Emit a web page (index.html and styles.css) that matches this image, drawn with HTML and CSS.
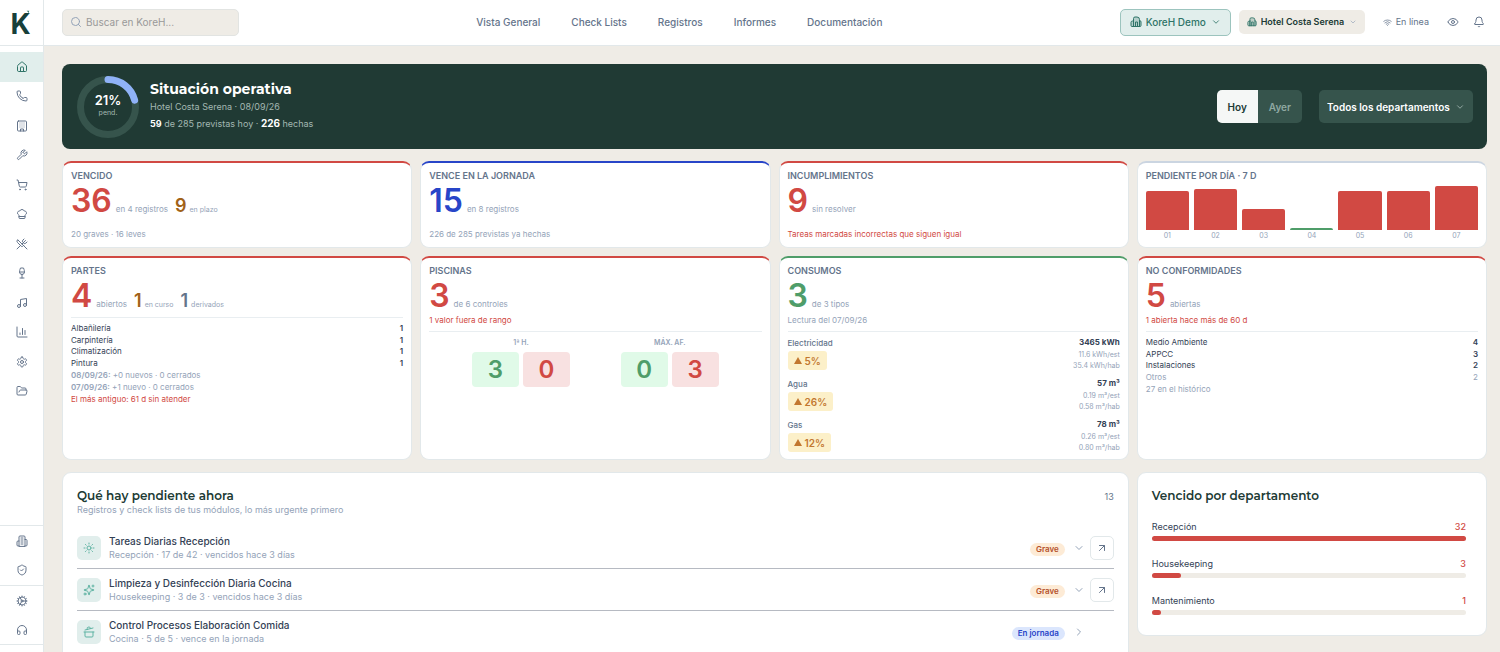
FILE: index.html
```html
<!doctype html>
<html lang="es">
  <head>
    <meta charset="UTF-8" />
    <meta name="viewport" content="width=device-width, initial-scale=1.0" />
    <title>KoreH - Vista General</title>
    <link rel="stylesheet" href="styles.css">
  </head>
  <body>
    <!-- icon sprite -->
    <svg class="sprite" aria-hidden="true">
      <symbol id="i-home" viewBox="0 0 24 24"><path d="M15 21v-8a1 1 0 0 0-1-1h-4a1 1 0 0 0-1 1v8"/><path d="M3 10a2 2 0 0 1 .709-1.528l7-6a2 2 0 0 1 2.582 0l7 6A2 2 0 0 1 21 10v9a2 2 0 0 1-2 2H5a2 2 0 0 1-2-2z"/></symbol>
      <symbol id="i-phone" viewBox="0 0 24 24"><path d="M13.832 16.568a1 1 0 0 0 1.213-.303l.355-.465A2 2 0 0 1 17 15h3a2 2 0 0 1 2 2v3a2 2 0 0 1-2 2A18 18 0 0 1 2 4a2 2 0 0 1 2-2h3a2 2 0 0 1 2 2v3a2 2 0 0 1-.8 1.6l-.468.351a1 1 0 0 0-.292 1.233 14 14 0 0 0 6.392 6.384"/></symbol>
      <symbol id="i-building" viewBox="0 0 24 24"><rect width="18" height="20" x="3" y="2" rx="2"/><path d="M9 22v-4h6v4M8 6h.01M16 6h.01M12 6h.01M12 10h.01M12 14h.01M16 10h.01M16 14h.01M8 10h.01M8 14h.01"/></symbol>
      <symbol id="i-wrench" viewBox="0 0 24 24"><path d="M14.7 6.3a1 1 0 0 0 0 1.4l1.6 1.6a1 1 0 0 0 1.4 0l3.77-3.77a6 6 0 0 1-7.94 7.94l-6.91 6.91a2.12 2.12 0 0 1-3-3l6.91-6.91a6 6 0 0 1 7.94-7.94l-3.76 3.76z"/></symbol>
      <symbol id="i-cart" viewBox="0 0 24 24"><circle cx="8" cy="21" r="1"/><circle cx="19" cy="21" r="1"/><path d="M2.05 2.05h2l2.66 12.42a2 2 0 0 0 2 1.58h9.78a2 2 0 0 0 1.95-1.57l1.65-7.43H5.12"/></symbol>
      <symbol id="i-chef" viewBox="0 0 24 24"><path d="M17 21a1 1 0 0 0 1-1v-5.35c0-.457.316-.844.727-1.041a4 4 0 0 0-2.134-7.589 5 5 0 0 0-9.186 0 4 4 0 0 0-2.134 7.588c.411.198.727.585.727 1.041V20a1 1 0 0 0 1 1Z"/><path d="M6 17h12"/></symbol>
      <symbol id="i-utensils" viewBox="0 0 24 24"><path d="m16 2-2.3 2.3a3 3 0 0 0 0 4.2l1.8 1.8a3 3 0 0 0 4.2 0L22 8"/><path d="M15 15 3.3 3.3a4.2 4.2 0 0 0 0 6l7.3 7.3c.7.7 2 .7 2.8 0L15 15Zm0 0 7 7"/><path d="m2.1 21.8 6.4-6.3M19 5l-7 7"/></symbol>
      <symbol id="i-wine" viewBox="0 0 24 24"><path d="M8 22h8M7 10h10M12 15v7"/><path d="M12 15a5 5 0 0 0 5-5c0-2-.5-4-2-8H9c-1.5 4-2 6-2 8a5 5 0 0 0 5 5Z"/></symbol>
      <symbol id="i-music" viewBox="0 0 24 24"><path d="M9 18V5l12-2v13"/><circle cx="6" cy="18" r="3"/><circle cx="18" cy="16" r="3"/></symbol>
      <symbol id="i-chart" viewBox="0 0 24 24"><path d="M2 2v18a2 2 0 0 0 2 2h18M18 17V9M13 17V5M8 17v-3"/></symbol>
      <symbol id="i-settings" viewBox="0 0 24 24"><path d="M12.22 2h-.44a2 2 0 0 0-2 2v.18a2 2 0 0 1-1 1.73l-.43.25a2 2 0 0 1-2 0l-.15-.08a2 2 0 0 0-2.73.73l-.22.38a2 2 0 0 0 .73 2.73l.15.1a2 2 0 0 1 1 1.72v.51a2 2 0 0 1-1 1.74l-.15.09a2 2 0 0 0-.73 2.73l.22.38a2 2 0 0 0 2.73.73l.15-.08a2 2 0 0 1 2 0l.43.25a2 2 0 0 1 1 1.73V20a2 2 0 0 0 2 2h.44a2 2 0 0 0 2-2v-.18a2 2 0 0 1 1-1.73l.43-.25a2 2 0 0 1 2 0l.15.08a2 2 0 0 0 2.73-.73l.22-.39a2 2 0 0 0-.73-2.73l-.15-.08a2 2 0 0 1-1-1.74v-.5a2 2 0 0 1 1-1.74l.15-.09a2 2 0 0 0 .73-2.73l-.22-.38a2 2 0 0 0-2.73-.73l-.15.08a2 2 0 0 1-2 0l-.43-.25a2 2 0 0 1-1-1.73V4a2 2 0 0 0-2-2z"/><circle cx="12" cy="12" r="3"/></symbol>
      <symbol id="i-folder" viewBox="0 0 24 24"><path d="m6 14 1.5-2.9A2 2 0 0 1 9.24 10H20a2 2 0 0 1 1.94 2.5l-1.54 6a2 2 0 0 1-1.95 1.5H4a2 2 0 0 1-2-2V5a2 2 0 0 1 2-2h3.9a2 2 0 0 1 1.69.9l.81 1.2a2 2 0 0 0 1.67.9H18a2 2 0 0 1 2 2v2"/></symbol>
      <symbol id="i-offices" viewBox="0 0 24 24"><path d="M6 22V4a2 2 0 0 1 2-2h8a2 2 0 0 1 2 2v18Z"/><path d="M6 12H4a2 2 0 0 0-2 2v6a2 2 0 0 0 2 2h2M18 9h2a2 2 0 0 1 2 2v9a2 2 0 0 1-2 2h-2M10 6h4M10 10h4M10 14h4M10 18h4"/></symbol>
      <symbol id="i-shield" viewBox="0 0 24 24"><path d="M20 13c0 5-3.5 7.5-7.66 8.95a1 1 0 0 1-.67-.01C7.5 20.5 4 18 4 13V6a1 1 0 0 1 1-1c2 0 4.5-1.2 6.24-2.72a1.17 1.17 0 0 1 1.52 0C14.51 3.81 17 5 19 5a1 1 0 0 1 1 1z"/><path d="m9 12 2 2 4-4"/></symbol>
      <symbol id="i-cog" viewBox="0 0 24 24"><circle cx="12" cy="12" r="8"/><circle cx="12" cy="12" r="2"/><path d="M12 2v2M12 22v-2M17 20.66l-1-1.73M11 10.27 7 3.34M20.66 17l-1.73-1M3.34 7l1.73 1M14 12h8M2 12h2M20.66 7l-1.73 1M3.34 17l1.73-1M17 3.34l-1 1.73M11 13.73l-4 6.93"/></symbol>
      <symbol id="i-headphones" viewBox="0 0 24 24"><path d="M3 14h3a2 2 0 0 1 2 2v3a2 2 0 0 1-2 2H5a2 2 0 0 1-2-2v-7a9 9 0 0 1 18 0v7a2 2 0 0 1-2 2h-1a2 2 0 0 1-2-2v-3a2 2 0 0 1 2-2h3"/></symbol>
      <symbol id="i-search" viewBox="0 0 24 24"><circle cx="11" cy="11" r="8"/><path d="m21 21-4.3-4.3"/></symbol>
      <symbol id="i-hotel" viewBox="0 0 24 24"><path fill="currentColor" fill-opacity=".25" d="M7 21V5a3 3 0 0 1 3-3h4a5 5 0 0 1 5 5v2a3 3 0 0 1 3 3v7a2 2 0 0 1-2 2H4a2 2 0 0 1-2-2v-6a3 3 0 0 1 3-3h2"/><path d="M7 9v12M11 21v-9h4v9M19 9v12"/></symbol>
      <symbol id="i-down" viewBox="0 0 24 24"><path d="m6 9 6 6 6-6"/></symbol>
      <symbol id="i-right" viewBox="0 0 24 24"><path d="m9 18 6-6-6-6"/></symbol>
      <symbol id="i-wifi" viewBox="0 0 24 24"><path d="M12 20h.01M2 8.82a15 15 0 0 1 20 0M5 12.86a10 10 0 0 1 14 0M8.5 16.43a5 5 0 0 1 7 0"/></symbol>
      <symbol id="i-eye" viewBox="0 0 24 24"><path d="M2.06 12.35a1 1 0 0 1 0-.7 10.75 10.75 0 0 1 19.88 0 1 1 0 0 1 0 .7 10.75 10.75 0 0 1-19.88 0"/><circle cx="12" cy="12" r="3"/></symbol>
      <symbol id="i-bell" viewBox="0 0 24 24"><path d="M10.27 21a2 2 0 0 0 3.46 0"/><path d="M3.26 15.33A1 1 0 0 0 4 17h16a1 1 0 0 0 .74-1.67C19.41 13.96 18 12.5 18 8A6 6 0 0 0 6 8c0 4.5-1.41 5.96-2.74 7.33"/></symbol>
      <symbol id="i-sun" viewBox="0 0 24 24"><circle cx="12" cy="12" r="4"/><path d="M12 2v2M12 20v2M4.93 4.93l1.41 1.41M17.66 17.66l1.41 1.41M2 12h2M20 12h2M6.34 17.66l-1.41 1.41M19.07 4.93l-1.41 1.41"/></symbol>
      <symbol id="i-sparkles" viewBox="0 0 24 24"><path d="M9.94 15.5A2 2 0 0 0 8.5 14.06l-6.14-1.58a.5.5 0 0 1 0-.96L8.5 9.94A2 2 0 0 0 9.94 8.5l1.58-6.14a.5.5 0 0 1 .96 0l1.58 6.14a2 2 0 0 0 1.44 1.44l6.14 1.58a.5.5 0 0 1 0 .96l-6.14 1.58a2 2 0 0 0-1.44 1.44l-1.58 6.14a.5.5 0 0 1-.96 0z"/><path d="M20 2v4M22 4h-4"/><circle cx="4" cy="20" r="2"/></symbol>
      <symbol id="i-pot" viewBox="0 0 24 24"><path d="M2 12h20M20 12v8a2 2 0 0 1-2 2H6a2 2 0 0 1-2-2v-8M4 8l16-4"/><path d="m8.86 6.78-.45-1.81a2 2 0 0 1 1.45-2.43l1.94-.48a2 2 0 0 1 2.43 1.46l.45 1.8"/></symbol>
      <symbol id="i-open" viewBox="0 0 24 24"><path d="M7 7h10v10M7 17 17 7"/></symbol>
    </svg>

    <aside class="sidebar">
      <a class="logo" href="#" aria-label="KoreH">K<svg class="logo-mark" viewBox="0 0 6 6"><path d="M1 1h4L3 6l0-3z"/></svg></a>
      <nav class="side-nav side-main" aria-label="Módulos">
        <a class="active" href="#"><svg class="icon"><use href="#i-home"/></svg></a>
        <a href="#"><svg class="icon"><use href="#i-phone"/></svg></a>
        <a href="#"><svg class="icon"><use href="#i-building"/></svg></a>
        <a href="#"><svg class="icon"><use href="#i-wrench"/></svg></a>
        <a href="#"><svg class="icon"><use href="#i-cart"/></svg></a>
        <a href="#"><svg class="icon"><use href="#i-chef"/></svg></a>
        <a href="#"><svg class="icon"><use href="#i-utensils"/></svg></a>
        <a href="#"><svg class="icon"><use href="#i-wine"/></svg></a>
        <a href="#"><svg class="icon"><use href="#i-music"/></svg></a>
        <a href="#"><svg class="icon"><use href="#i-chart"/></svg></a>
        <a href="#"><svg class="icon"><use href="#i-settings"/></svg></a>
        <a href="#"><svg class="icon"><use href="#i-folder"/></svg></a>
      </nav>
      <nav class="side-nav side-group" aria-label="Empresa">
        <a href="#"><svg class="icon"><use href="#i-offices"/></svg></a>
        <a href="#"><svg class="icon"><use href="#i-shield"/></svg></a>
      </nav>
      <nav class="side-nav side-group side-last" aria-label="Ajustes">
        <a href="#"><svg class="icon"><use href="#i-cog"/></svg></a>
        <a href="#"><svg class="icon"><use href="#i-headphones"/></svg></a>
      </nav>
    </aside>

    <div class="page">
      <header class="topbar">
        <label class="search">
          <svg class="icon"><use href="#i-search"/></svg>
          <input type="search" placeholder="Buscar en KoreH..." aria-label="Buscar en KoreH" />
        </label>
        <nav class="top-nav">
          <a href="#">Vista General</a>
          <a href="#">Check Lists</a>
          <a href="#">Registros</a>
          <a href="#">Informes</a>
          <a href="#">Documentación</a>
        </nav>
        <div class="tools">
          <label class="picker picker-company">
            <svg class="icon"><use href="#i-hotel"/></svg>
            <select aria-label="Empresa"><option>KoreH Demo</option></select>
            <svg class="icon chevron"><use href="#i-down"/></svg>
          </label>
          <label class="picker picker-hotel">
            <svg class="icon"><use href="#i-hotel"/></svg>
            <select aria-label="Hotel"><option>Hotel Costa Serena</option></select>
            <svg class="icon chevron"><use href="#i-down"/></svg>
          </label>
          <span class="online"><svg class="icon"><use href="#i-wifi"/></svg>En línea</span>
          <button class="icon-btn" type="button" aria-label="Vista"><svg class="icon"><use href="#i-eye"/></svg></button>
          <button class="icon-btn" type="button" aria-label="Avisos"><svg class="icon"><use href="#i-bell"/></svg></button>
        </div>
      </header>

      <main class="content">
        <section class="hero">
          <div class="ring">
            <svg viewBox="0 0 62 62">
              <circle class="ring-track" cx="31" cy="31" r="27.500"/>
              <circle class="ring-value" cx="31" cy="31" r="27.500" pathLength="100" stroke-dasharray="21 100"/>
            </svg>
            <div class="ring-label"><strong>21%</strong><span>pend.</span></div>
          </div>
          <div class="hero-text">
            <h1>Situación operativa</h1>
            <p>Hotel Costa Serena · 08/09/26</p>
            <p><strong>59</strong> de 285 previstas hoy · <strong class="done">226</strong> hechas</p>
          </div>
          <div class="segment">
            <button class="on" type="button">Hoy</button>
            <button type="button">Ayer</button>
          </div>
          <label class="picker picker-dept">
            <select aria-label="Departamento"><option>Todos los departamentos</option></select>
            <svg class="icon chevron"><use href="#i-down"/></svg>
          </label>
        </section>

        <section class="cards">
          <article class="card red">
            <h2>Vencido</h2>
            <p class="figures"><b class="big">36</b><span>en 4 registros</span><b class="mid amber">9</b><small>en plazo</small></p>
            <p class="note foot">20 graves · 16 leves</p>
          </article>
          <article class="card blue">
            <h2>Vence en la jornada</h2>
            <p class="figures"><b class="big">15</b><span>en 8 registros</span></p>
            <p class="note foot">226 de 285 previstas ya hechas</p>
          </article>
          <article class="card red">
            <h2>Incumplimientos</h2>
            <p class="figures"><b class="big">9</b><span>sin resolver</span></p>
            <p class="note foot alert">Tareas marcadas incorrectas que siguen igual</p>
          </article>
          <article class="card plain">
            <h2>Pendiente por día · 7 d</h2>
            <div class="bars">
              <div class="day"><i style="height: 39px"></i><span>01</span></div>
              <div class="day"><i style="height: 41px"></i><span>02</span></div>
              <div class="day"><i style="height: 21px"></i><span>03</span></div>
              <div class="day"><i class="none"></i><span>04</span></div>
              <div class="day"><i style="height: 39px"></i><span>05</span></div>
              <div class="day"><i style="height: 39px"></i><span>06</span></div>
              <div class="day"><i style="height: 44px"></i><span>07</span></div>
            </div>
          </article>

          <article class="card red">
            <h2>Partes</h2>
            <p class="figures"><b class="big">4</b><span>abiertos</span><b class="mid amber">1</b><small>en curso</small><b class="mid slate">1</b><small>derivados</small></p>
            <div class="detail">
              <dl class="list">
                <div><dt>Albañilería</dt><dd>1</dd></div>
                <div><dt>Carpintería</dt><dd>1</dd></div>
                <div><dt>Climatización</dt><dd>1</dd></div>
                <div><dt>Pintura</dt><dd>1</dd></div>
              </dl>
              <p class="log"><b>08/09/26:</b> +0 nuevos · 0 cerrados</p>
              <p class="log"><b>07/09/26:</b> +1 nuevo · 0 cerrados</p>
              <p class="log alert">El más antiguo: 61 d sin atender</p>
            </div>
          </article>
          <article class="card red">
            <h2>Piscinas</h2>
            <p class="figures"><b class="big">3</b><span>de 6 controles</span></p>
            <p class="note alert">1 valor fuera de rango</p>
            <div class="detail pools">
              <div class="pool">
                <h3>1ª H.</h3>
                <div class="tiles"><b class="ok">3</b><b class="bad">0</b></div>
              </div>
              <div class="pool">
                <h3>MÁX. AF.</h3>
                <div class="tiles"><b class="ok">0</b><b class="bad">3</b></div>
              </div>
            </div>
          </article>
          <article class="card green">
            <h2>Consumos</h2>
            <p class="figures"><b class="big">3</b><span>de 3 tipos</span></p>
            <p class="note">Lectura del 07/09/26</p>
            <div class="detail meters">
              <div class="meter">
                <div><h3>Electricidad</h3><span class="trend"><i></i>5%</span></div>
                <div class="reading"><b>3465 kWh</b><span>11.6 kWh/est</span><span>35.4 kWh/hab</span></div>
              </div>
              <div class="meter">
                <div><h3>Agua</h3><span class="trend"><i></i>26%</span></div>
                <div class="reading"><b>57 m³</b><span>0.19 m³/est</span><span>0.58 m³/hab</span></div>
              </div>
              <div class="meter">
                <div><h3>Gas</h3><span class="trend"><i></i>12%</span></div>
                <div class="reading"><b>78 m³</b><span>0.26 m³/est</span><span>0.80 m³/hab</span></div>
              </div>
            </div>
          </article>
          <article class="card red">
            <h2>No conformidades</h2>
            <p class="figures"><b class="big">5</b><span>abiertas</span></p>
            <p class="note alert">1 abierta hace más de 60 d</p>
            <div class="detail">
              <dl class="list">
                <div><dt>Medio Ambiente</dt><dd>4</dd></div>
                <div><dt>APPCC</dt><dd>3</dd></div>
                <div><dt>Instalaciones</dt><dd>2</dd></div>
                <div class="others"><dt>Otros</dt><dd>2</dd></div>
              </dl>
              <p class="log">27 en el histórico</p>
            </div>
          </article>
        </section>

        <section class="panels">
          <article class="panel pending">
            <header>
              <div>
                <h2>Qué hay pendiente ahora</h2>
                <p>Registros y check lists de tus módulos, lo más urgente primero</p>
              </div>
              <span class="count">13</span>
            </header>
            <ul>
              <li>
                <span class="tag-icon"><svg class="icon"><use href="#i-sun"/></svg></span>
                <div class="task"><h3>Tareas Diarias Recepción</h3><p>Recepción · 17 de 42 · vencidos hace 3 días</p></div>
                <span class="badge grave">Grave</span>
                <svg class="icon chevron"><use href="#i-down"/></svg>
                <button class="open" type="button" aria-label="Abrir"><svg class="icon"><use href="#i-open"/></svg></button>
              </li>
              <li>
                <span class="tag-icon"><svg class="icon"><use href="#i-sparkles"/></svg></span>
                <div class="task"><h3>Limpieza y Desinfección Diaria Cocina</h3><p>Housekeeping · 3 de 3 · vencidos hace 3 días</p></div>
                <span class="badge grave">Grave</span>
                <svg class="icon chevron"><use href="#i-down"/></svg>
                <button class="open" type="button" aria-label="Abrir"><svg class="icon"><use href="#i-open"/></svg></button>
              </li>
              <li>
                <span class="tag-icon"><svg class="icon"><use href="#i-pot"/></svg></span>
                <div class="task"><h3>Control Procesos Elaboración Comida</h3><p>Cocina · 5 de 5 · vence en la jornada</p></div>
                <span class="badge today">En jornada</span>
                <svg class="icon chevron"><use href="#i-right"/></svg>
                <span class="open-space"></span>
              </li>
            </ul>
          </article>
          <article class="panel depts">
            <h2>Vencido por departamento</h2>
            <div class="dept">
              <p>Recepción <b>32</b></p>
              <div class="track"><i style="width: 100%"></i></div>
            </div>
            <div class="dept">
              <p>Housekeeping <b>3</b></p>
              <div class="track"><i style="width: 9.4%"></i></div>
            </div>
            <div class="dept">
              <p>Mantenimiento <b>1</b></p>
              <div class="track"><i style="width: 3.1%"></i></div>
            </div>
          </article>
        </section>
      </main>
    </div>
  </body>
</html>
```

FILE: styles.css
```css
* {
  box-sizing: border-box;
}

body {
  margin: 0;
  height: 100vh;
  display: flex;
  overflow: hidden;
  background: #efece6;
  color: #334155;
  font-family: Inter, "Liberation Sans", sans-serif;
  font-size: 9px;
  line-height: 12px;
}

h1,
h2,
h3,
p,
ul,
dl,
dd {
  margin: 0;
  padding: 0;
}

a {
  color: inherit;
  text-decoration: none;
}

button,
input,
select {
  font: inherit;
  color: inherit;
  border: none;
  background: none;
  padding: 0;
  margin: 0;
}

select {
  appearance: none;
  cursor: pointer;
}

button {
  cursor: pointer;
}

.sprite {
  position: absolute;
  width: 0;
  height: 0;
}

.icon {
  width: 12px;
  height: 12px;
  flex: none;
  fill: none;
  stroke: currentColor;
  stroke-width: 2;
  stroke-linecap: round;
  stroke-linejoin: round;
}

/* sidebar */
.sidebar {
  width: 44px;
  flex: none;
  display: flex;
  flex-direction: column;
  background: #fff;
  border-right: 1px solid #e2e8ea;
  color: #64748b;
}

.logo {
  position: relative;
  height: 46px;
  flex: none;
  padding-right: 2px;
  border-bottom: 1px solid #e2e8ea;
  color: #17403a;
  font-size: 28px;
  font-weight: 700;
  line-height: 49px;
  text-align: center;
}

.logo-mark {
  position: absolute;
  top: 10px;
  right: 13px;
  width: 4px;
  height: 4px;
  fill: #3d7a70;
}

.side-nav {
  display: grid;
  grid-auto-rows: 1fr;
}

.side-nav a {
  display: grid;
  place-items: center;
}

.side-main {
  height: 354px;
  margin-top: 6px;
  margin-bottom: auto;
}

.side-nav .active {
  background: #e1eeec;
  color: #2f7468;
}

.side-group {
  height: 60px;
  border-top: 1px solid #e2e8ea;
}

.side-last {
  margin-bottom: 7px;
  border-bottom: 1px solid #e2e8ea;
}

/* top bar */
.page {
  flex: 1;
  min-width: 0;
}

.topbar {
  height: 46px;
  display: flex;
  align-items: center;
  justify-content: space-between;
  padding: 0 15px 1px 18px;
  background: #fff;
  border-bottom: 1px solid #e2e8ea;
}

.search {
  width: 177px;
  height: 27px;
  display: flex;
  align-items: center;
  gap: 4px;
  padding: 0 7px;
  border: 1px solid #e2e4e2;
  border-radius: 5px;
  background: #efece6;
  color: #94a3b8;
}

.search input {
  width: 100%;
  outline: none;
  font-size: 10px;
}

.search input::placeholder {
  color: #999;
}

.top-nav {
  display: flex;
  gap: 31px;
  color: #64748b;
  font-size: 10px;
  font-weight: 500;
}

.tools {
  display: flex;
  align-items: center;
  justify-content: flex-end;
}

.picker {
  display: flex;
  align-items: center;
  gap: 4px;
  cursor: pointer;
}

.picker-company {
  height: 27px;
  padding: 0 9px;
  border: 1px solid #9cc4be;
  border-radius: 5px;
  background: #e1eeec;
  color: #2f7468;
  font-size: 10px;
  font-weight: 500;
}

.picker-hotel {
  height: 24px;
  margin-left: 8px;
  padding: 0 8px;
  border-radius: 5px;
  background: #efece6;
  color: #203a34;
  font-weight: 600;
}

.picker .chevron {
  width: 10px;
  height: 10px;
}

.picker-hotel .chevron {
  width: 8px;
  height: 8px;
  color: #94a3b8;
}

.picker-hotel .icon:first-child {
  width: 10px;
  height: 10px;
  color: #2f7468;
}

.online {
  display: flex;
  align-items: center;
  gap: 4px;
  margin-left: 18px;
  margin-right: 18px;
  color: #64748b;
}

.online .icon {
  width: 9px;
  height: 9px;
}

.icon-btn {
  display: flex;
  color: #64748b;
}

.icon-btn + .icon-btn {
  margin-left: 14px;
}

/* hero */
.content {
  padding: 18px 13px 0 18px;
}

.hero {
  height: 85px;
  display: flex;
  align-items: center;
  padding: 0 14px 0 15px;
  border-radius: 8px;
  background: #203a34;
  color: #a3b8b2;
}

.ring {
  position: relative;
  width: 62px;
  height: 62px;
  margin-right: 11px;
}

.ring circle {
  fill: none;
  stroke-width: 7;
}

.ring-track {
  stroke: #36544c;
}

.ring-value {
  stroke: #8fb2f7;
  stroke-linecap: round;
  transform: rotate(-90deg);
  transform-origin: center;
}

.ring-label {
  position: absolute;
  inset: 0;
  display: flex;
  flex-direction: column;
  align-items: center;
  justify-content: center;
  font-size: 7px;
}

.ring-label strong {
  color: #fff;
  font-size: 13px;
  font-weight: 600;
  line-height: 13px;
}

.hero-text {
  flex: 1;
  line-height: 17px;
}

.hero-text h1 {
  color: #fff;
  font-family: Montserrat, Inter, sans-serif;
  font-size: 14px;
  font-weight: 700;
}

.hero-text strong {
  color: #fff;
}

.hero-text .done {
  font-size: 10px;
}

.segment {
  display: flex;
  height: 33px;
  margin-right: 17px;
  border-radius: 5px;
  overflow: hidden;
  background: #36544c;
  color: #8fa8a1;
  font-size: 10px;
  font-weight: 600;
}

.segment button {
  padding: 0 11px;
}

.segment .on {
  background: #f5f7f6;
  color: #203a34;
}

.picker-dept {
  height: 33px;
  gap: 5px;
  padding: 0 8px;
  border-radius: 5px;
  background: #36544c;
  color: #fff;
  font-size: 10px;
  font-weight: 600;
}

.picker-dept .chevron {
  color: #a3b8b2;
}

/* indicator cards */
.cards {
  display: grid;
  grid-template-columns: repeat(4, 1fr);
  gap: 8px;
  margin-top: 12px;
}

.card {
  display: flex;
  flex-direction: column;
  padding: 6px 8px 7px;
  border: 1px solid #e2e8ea;
  border-top: 2px solid var(--tone);
  border-radius: 9px;
  background: #fff;
}

.red {
  --tone: #d14943;
}

.blue {
  --tone: #2845c8;
}

.green {
  --tone: #4f9d69;
}

.plain {
  --tone: #cbd5e1;
}

.card h2 {
  color: #64748b;
  font-size: 9px;
  font-weight: 600;
  line-height: 13px;
  text-transform: uppercase;
}

.figures {
  display: flex;
  align-items: baseline;
  height: 33px;
  margin-top: 2px;
  color: #94a3b8;
  font-size: 8px;
}

.figures b {
  font-weight: 600;
}

.figures small {
  font-size: 7px;
}

.big {
  margin-right: 4px;
  color: var(--tone);
  font-size: 32px;
  line-height: 33px;
}

.mid {
  margin: 0 3px 0 7px;
  font-size: 18px;
}

.amber {
  color: #a16219;
}

.slate {
  color: #64748b;
}

.note {
  margin-top: 2px;
  color: #94a3b8;
  font-size: 8px;
}

.foot {
  margin-top: auto;
}

.alert.alert {
  color: #d14943;
}

.bars {
  display: grid;
  grid-template-columns: repeat(7, 1fr);
  gap: 5px;
  height: 58px;
}

.day {
  display: flex;
  flex-direction: column;
  justify-content: flex-end;
  color: #94a3b8;
  font-size: 7px;
  line-height: 8px;
  text-align: center;
}

.day i {
  margin-bottom: 2px;
  border-radius: 2px 2px 0 0;
  background: #d14943;
}

.day .none {
  height: 2px;
  background: #4f9d69;
}

.detail {
  margin-top: 5px;
  padding-top: 5px;
  border-top: 1px solid #e9eef1;
  font-size: 8px;
}

.list {
  display: grid;
  grid-auto-rows: 1fr;
  height: 46px;
  line-height: 11px;
}

.list div {
  display: flex;
  justify-content: space-between;
}

.list dd {
  font-weight: 600;
}

.list .others,
.list .others dd {
  color: #94a3b8;
  font-weight: 400;
}

.log {
  color: #94a3b8;
}

.log b {
  font-weight: 600;
}

.pools {
  display: flex;
  justify-content: space-evenly;
  gap: 8px;
}

.pool h3 {
  margin-bottom: 3px;
  color: #94a3b8;
  font-size: 7px;
  font-weight: 600;
  text-align: center;
}

.tiles {
  display: flex;
  gap: 4px;
}

.tiles b {
  width: 47px;
  border-radius: 4px;
  font-size: 24px;
  font-weight: 600;
  line-height: 35px;
  text-align: center;
}

.ok {
  background: #e0fae8;
  color: #4f9d69;
}

.bad {
  background: #f8e1e1;
  color: #d14943;
}

.meters {
  display: grid;
  gap: 8px;
}

.meter {
  display: flex;
  justify-content: space-between;
  height: 33px;
}

.meter h3 {
  margin-bottom: 2px;
  color: #64748b;
  font-size: 8px;
  font-weight: 500;
  line-height: 12px;
}

.trend {
  display: inline-flex;
  align-items: center;
  gap: 3px;
  height: 19px;
  padding: 0 6px;
  border-radius: 3px;
  background: #fcf0c9;
  color: #c2772f;
  font-size: 10px;
  font-weight: 600;
}

.trend i {
  border: 4px solid transparent;
  border-top: none;
  border-bottom: 7px solid currentColor;
}

.reading {
  display: flex;
  flex-direction: column;
  color: #94a3b8;
  font-size: 7px;
  line-height: 11px;
  text-align: right;
}

.reading b {
  margin-bottom: 1px;
  color: #334155;
  font-size: 8px;
  font-weight: 700;
}

/* bottom panels */
.panels {
  display: grid;
  grid-template-columns: repeat(4, 1fr);
  gap: 8px;
  align-items: start;
  margin-top: 12px;
}

.panel {
  padding: 14px;
  border: 1px solid #e2e8ea;
  border-radius: 9px;
  background: #fff;
}

.panel h2 {
  color: #203a34;
  font-family: Montserrat, Inter, sans-serif;
  font-size: 12px;
  font-weight: 600;
  line-height: 17px;
}

.pending {
  grid-column: span 3;
}

.pending header {
  display: flex;
  justify-content: space-between;
  margin-bottom: 11px;
  color: #94a3b8;
}

.count {
  color: #64748b;
  line-height: 20px;
}

.pending ul {
  list-style: none;
}

.pending li {
  display: flex;
  align-items: center;
  height: 42px;
  border-bottom: 1px solid #b6bac2;
}

.tag-icon {
  width: 24px;
  height: 24px;
  display: grid;
  place-items: center;
  border-radius: 5px;
  background: #e1eeec;
  color: #5fb3a3;
}

.task {
  flex: 1;
  margin-left: 8px;
  color: #94a3b8;
  line-height: 13px;
}

.task h3 {
  color: #334155;
  font-size: 10px;
  font-weight: 500;
}

.badge {
  margin-top: 3px;
  padding: 0 6px;
  border-radius: 7px;
  font-size: 8px;
  font-weight: 600;
  line-height: 13px;
}

.grave {
  background: #fdebd6;
  color: #b4512a;
}

.today {
  background: #dbe6fd;
  color: #2845c8;
}

.pending .chevron {
  margin: 0 5px 0 8px;
  color: #94a3b8;
}

.open,
.open-space {
  width: 24px;
  height: 24px;
}

.open {
  display: grid;
  place-items: center;
  border: 1px solid #e2e8ea;
  border-radius: 5px;
  color: #64748b;
}

.depts {
  padding-bottom: 20px;
}

.dept {
  margin-top: 17px;
  padding-right: 6px;
}

.dept p {
  display: flex;
  justify-content: space-between;
  margin-bottom: 3px;
}

.dept b {
  color: #d14943;
  font-weight: 500;
}

.track {
  height: 5px;
  border-radius: 3px;
  background: #efece6;
}

.track i {
  display: block;
  height: 5px;
  border-radius: 3px;
  background: #d14943;
}
```
